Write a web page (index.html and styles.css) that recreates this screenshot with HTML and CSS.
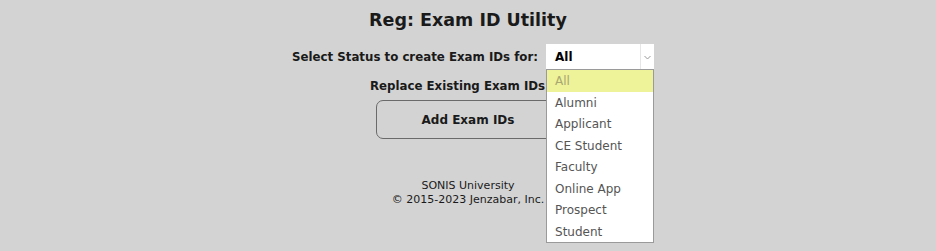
FILE: index.html
```html
<!DOCTYPE html>
<html lang="en">
<head>
    <meta charset="UTF-8">
    <title>Reg: Exam ID Utility</title>
    <link rel="stylesheet" href="styles.css">
</head>
<body>
    <div class="pagina">
        <h1 class="titulo">Reg: Exam ID Utility</h1>

        <div class="fila">
            <label class="etiqueta">Select Status to create Exam IDs for:</label>
            <div class="combo">
                <div class="combo-valor">All</div>
                <div class="combo-flecha">
                    <svg width="7" height="5" viewBox="0 0 7 5"><path d="M0.5 1 L3.5 4 L6.5 1" fill="none" stroke="#9a9a9a" stroke-width="1"/></svg>
                </div>
                <!-- lista abierta -->
                <ul class="lista">
                    <li class="activo">All</li>
                    <li>Alumni</li>
                    <li>Applicant</li>
                    <li>CE Student</li>
                    <li>Faculty</li>
                    <li>Online App</li>
                    <li>Prospect</li>
                    <li>Student</li>
                </ul>
            </div>
        </div>

        <div class="fila">
            <label class="etiqueta">Replace Existing Exam IDs</label>
            <input type="checkbox" class="casilla">
        </div>

        <button class="boton">Add Exam IDs</button>

        <div class="pie">
            SONIS University<br>
            &copy; 2015-2023 Jenzabar, Inc.
        </div>
    </div>
</body>
</html>
```

FILE: styles.css
```css
/* Cuerpo */
html, body {
    height: 100%;
}

body {
    margin: 0;
    background-color: #d3d3d3;
    font-family: "DejaVu Sans", sans-serif;
    color: #1a1a1a;
}

.pagina {
    display: flex;
    flex-direction: column;
    align-items: center;
    min-height: 100%;
}

.titulo {
    font-size: 17.5px;
    font-weight: bold;
    margin: 10px 0 14px 0;
}

.fila {
    display: flex;
    align-items: center;
    gap: 8px;
    margin-left: 10px;
}

.fila + .fila {
    margin-top: 9px;
    margin-left: 0;
}

.etiqueta {
    font-size: 11.8px;
    font-weight: bold;
}

/* Select */
.combo {
    position: relative;
    width: 108px;
    height: 26px;
    background-color: #fff;
    display: flex;
    box-sizing: border-box;
}

.combo-valor {
    flex: 1;
    padding-left: 9px;
    font-size: 12px;
    font-weight: bold;
    line-height: 27px;
    color: #000;
}

.combo-flecha {
    width: 13px;
    border-left: 1px solid #e6e6e6;
    display: flex;
    align-items: center;
    justify-content: center;
}

.lista {
    position: absolute;
    top: 25px;
    left: 0;
    width: 108px;
    margin: 0;
    padding: 0;
    list-style: none;
    background-color: #fff;
    border: 1px solid #9a9a9a;
    box-sizing: border-box;
    z-index: 5;
}

.lista li {
    height: 21.5px;
    line-height: 22px;
    padding-left: 8px;
    font-size: 12px;
    color: #555;
}

.lista li.activo {
    background-color: #eef299;
    color: #a8a872;
}

.casilla {
    width: 13px;
    height: 13px;
    margin: 0;
}

/* Botón */
.boton {
    margin-top: 7px;
    width: 184px;
    height: 39px;
    background-color: #d3d3d3;
    border: 1px solid #6a6a6a;
    border-radius: 7px;
    font-family: "DejaVu Sans", sans-serif;
    font-size: 12px;
    font-weight: bold;
    color: #1a1a1a;
}

.pie {
    margin-top: 40px;
    font-size: 11px;
    line-height: 14px;
    text-align: center;
}
```
